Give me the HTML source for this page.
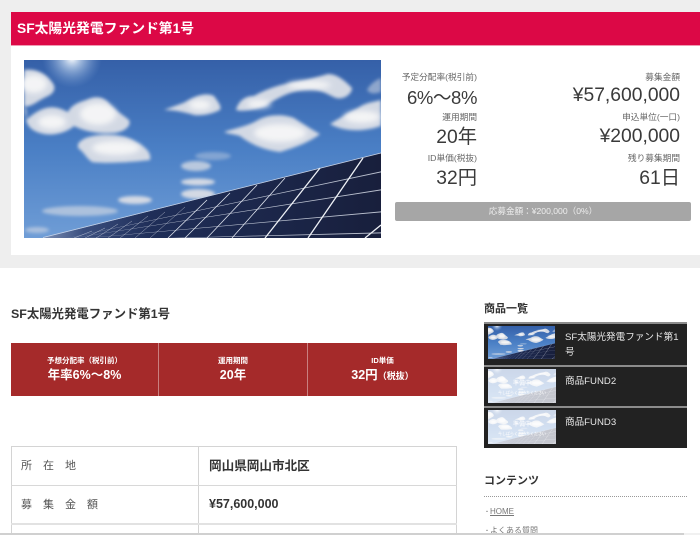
<!DOCTYPE html>
<html lang="ja"><head><meta charset="utf-8"><style>
html,body{margin:0;padding:0;width:700px;height:535px;overflow:hidden;background:#fff}
body{position:relative;font-family:"Liberation Sans","Noto Sans CJK JP",sans-serif;color:#333}
.a{position:absolute;white-space:nowrap}
.l{font-size:8.700px;color:#666;line-height:12px;text-align:right}
.v{font-size:19.300px;color:#3a3a3a;line-height:24px;text-align:right}
.r{color:#fff;text-align:center}
.th{color:#555;font-size:11px;letter-spacing:11px}
</style></head><body>
<svg width="0" height="0" style="position:absolute"><defs>
<linearGradient id="sky" x1="0" y1="0" x2="0" y2="1"><stop offset="0" stop-color="#3560a8"/><stop offset=".5" stop-color="#4a7fc5"/><stop offset="1" stop-color="#6f9dd6"/></linearGradient>
<radialGradient id="sun"><stop offset="0" stop-color="#fff"/><stop offset=".3" stop-color="#cfe0f3" stop-opacity=".7"/><stop offset="1" stop-color="#7ba0d4" stop-opacity="0"/></radialGradient>
<linearGradient id="pan" x1="0" y1="0" x2="1" y2="0"><stop offset="0" stop-color="#7b8fb5"/><stop offset=".12" stop-color="#3a4e7e"/><stop offset=".32" stop-color="#1f2e58"/><stop offset="1" stop-color="#181f3c"/></linearGradient>
<filter id="b1" x="-10%" y="-20%" width="120%" height="140%"><feGaussianBlur stdDeviation="1.500"/></filter>
<filter id="b3" x="-10%" y="-20%" width="120%" height="140%"><feGaussianBlur stdDeviation="3"/></filter>
<filter id="b2" x="-5%" y="-5%" width="110%" height="110%"><feGaussianBlur stdDeviation=".3"/></filter>
<symbol id="photo" viewBox="0 0 357 178" preserveAspectRatio="none">
<rect width="357" height="178" fill="url(#sky)"/>
<circle cx="48" cy="-2" r="30" fill="url(#sun)"/>
<g fill="#d3d9e4" filter="url(#b1)">
<path d="M0 10C12 8 22 14 28 22C33 28 30 34 22 37C12 42 6 48 0 46Z"/>
<path d="M0 46C4 50 2 56 2 60C8 55 14 50 22 48C30 46 36 48 44 52C48 44 56 42 62 40C70 36 78 36 84 42C90 50 98 54 105 60C108 66 100 72 90 73C75 74 62 72 50 66C44 72 30 76 20 74C10 72 4 68 2 60Z"/>
<path d="M54 84C58 78 66 76 76 75C90 74 104 76 112 82C120 86 128 92 126 100C110 102 80 104 68 102C62 98 60 92 54 88Z"/>
<path d="M140 50C150 46 158 44 165 40C172 36 182 32 190 36C194 42 198 46 196 50C188 54 178 56 170 55C160 52 150 50 140 50Z"/>
<path d="M212 50C214 42 220 36 230 36C240 30 256 24 272 22C284 20 296 16 304 14C314 14 322 22 328 28C328 34 320 40 312 38C302 34 296 28 280 30C262 32 252 40 240 46C230 50 220 52 212 50Z"/>
<path d="M200 72C212 68 224 66 234 60C244 54 260 54 270 58C282 66 292 72 296 74C286 82 270 88 256 92C240 90 226 84 216 76C210 74 204 74 200 72Z"/>
<path d="M306 64C316 58 326 52 334 48C342 42 350 42 357 40V66C340 72 320 72 306 64Z"/>
<path d="M343 30C346 24 352 20 357 18V32C350 34 346 34 343 30Z" opacity=".55"/>
<ellipse cx="172" cy="106" rx="15" ry="5" opacity=".8"/>
<ellipse cx="174" cy="122" rx="17" ry="3.500"/><ellipse cx="174" cy="134" rx="17" ry="5"/><ellipse cx="111" cy="140" rx="17" ry="4"/>
<ellipse cx="56" cy="151" rx="38" ry="5" opacity=".65"/><ellipse cx="13" cy="170" rx="12" ry="3" opacity=".6"/><ellipse cx="189" cy="96" rx="18" ry="4" opacity=".4"/>
</g>
<g fill="#f8f8f8" filter="url(#b3)" opacity=".9">
<ellipse cx="10" cy="24" rx="13" ry="9"/><ellipse cx="28" cy="62" rx="14" ry="7"/><ellipse cx="74" cy="54" rx="18" ry="11"/><ellipse cx="92" cy="88" rx="24" ry="7"/><ellipse cx="176" cy="45" rx="11" ry="5"/><ellipse cx="285" cy="25" rx="22" ry="4"/><ellipse cx="235" cy="44" rx="12" ry="4"/><ellipse cx="256" cy="73" rx="26" ry="9"/><ellipse cx="338" cy="57" rx="18" ry="6"/>
</g>
<polygon points="357,93 357,178 19,178" fill="url(#pan)"/>
<g filter="url(#b2)">
<g fill="#d6dce8" opacity=".85">
<polygon points="357,111.400 357,112.400 30,181"/>
<polygon points="357,129.400 357,130.400 30,181"/>
<polygon points="357,151.400 357,152.400 30,181"/>
<polygon points="357,172.400 357,173.400 30,181"/>
</g>
<path d="M19 177.500L357 93" stroke="#c8d3e6" stroke-width=".8"/>
<g stroke="#eef1f6" fill="none" stroke-width="1.300">
<path d="M339 98L284 178M296 108L241 178M357 165L341 178"/>
</g>
<g stroke="#dfe4ee" fill="none" stroke-width=".8">
<path d="M261 118L208 178M233 125L183 178M206 133L161 178M183 140L144 178"/>
</g>
<g stroke="#dfe4ee" fill="none" stroke-width=".5" opacity=".7">
<path d="M161 147L126 178M141 152L111 178M124 156L96 178M108 161L84 178M94 164L72 178M81 168L61 178M68 171L50 178"/>
</g>
</g>
</symbol>
</defs></svg>

<div class="a" style="left:0;top:0;width:700px;height:268px;background:#eee"></div>
<div class="a" style="left:11px;top:46px;width:689px;height:209px;background:#fff"></div>
<div class="a" style="left:11px;top:12px;width:689px;height:34px;background:#dc0846;border-bottom:1px solid #ef9ab2;box-sizing:border-box"></div>
<div class="a" style="left:17px;top:18px;font-size:13.800px;line-height:21px;font-weight:700;color:#fff">SF太陽光発電ファンド第1号</div>
<svg class="a" style="left:24px;top:60px" width="357" height="178"><use href="#photo" width="357" height="178"/></svg>

<div class="a l" style="left:377px;width:100px;top:71px">予定分配率(税引前)</div>
<div class="a v" style="left:377px;width:100px;top:86px;font-size:18.500px;letter-spacing:-.4px">6%～8%</div>
<div class="a l" style="left:377px;width:100px;top:111px">運用期間</div>
<div class="a v" style="left:377px;width:100px;top:126px">20年</div>
<div class="a l" style="left:377px;width:100px;top:152px">ID単価(税抜)</div>
<div class="a v" style="left:377px;width:100px;top:167px">32円</div>
<div class="a l" style="left:560px;width:120px;top:71px">募集金額</div>
<div class="a v" style="left:540px;width:140px;top:84px">¥57,600,000</div>
<div class="a l" style="left:560px;width:120px;top:111px">申込単位(一口)</div>
<div class="a v" style="left:540px;width:140px;top:125px">¥200,000</div>
<div class="a l" style="left:560px;width:120px;top:152px">残り募集期間</div>
<div class="a v" style="left:540px;width:140px;top:167px">61日</div>
<div class="a" style="left:395px;top:202px;width:296px;height:19px;background:#a6a6a6;border-radius:2px;color:#eee;font-size:8.600px;line-height:19px;text-align:center">応募金額：¥200,000（0%）</div>

<div class="a" style="left:11px;top:305px;font-size:12.400px;line-height:18px;font-weight:700;color:#333">SF太陽光発電ファンド第1号</div>

<div class="a" style="left:11px;top:343px;width:446px;height:53px;background:#a52a2a"></div>
<div class="a" style="left:158px;top:343px;width:1px;height:53px;background:#c98080"></div>
<div class="a" style="left:307px;top:343px;width:1px;height:53px;background:#c98080"></div>
<div class="a r" style="left:11px;width:147px;top:355px;font-size:7.500px;line-height:12px;font-weight:700">予想分配率（税引前）</div>
<div class="a r" style="left:11px;width:147px;top:366px;font-size:12.500px;line-height:18px;font-weight:700">年率6%～8%</div>
<div class="a r" style="left:159px;width:148px;top:355px;font-size:7.500px;line-height:12px;font-weight:700">運用期間</div>
<div class="a r" style="left:159px;width:148px;top:366px;font-size:12.500px;line-height:18px;font-weight:700">20年</div>
<div class="a r" style="left:308px;width:149px;top:355px;font-size:7.500px;line-height:12px;font-weight:700">ID単価</div>
<div class="a r" style="left:308px;width:149px;top:366px;font-size:12.500px;line-height:18px;font-weight:700">32円<span style="font-size:9px">（税抜）</span></div>

<div class="a" style="left:11px;top:446px;width:446px;height:87px;box-sizing:border-box;border:1px solid #d4d4d4;border-bottom:0"></div>
<div class="a" style="left:198px;top:446px;width:1px;height:87px;background:#d4d4d4"></div>
<div class="a" style="left:11px;top:485px;width:446px;height:1px;background:#d8d8d8"></div>
<div class="a" style="left:11px;top:523px;width:446px;height:2px;background:#e2e2e2"></div>
<div class="a th" style="left:21px;top:458px;line-height:17px">所在地</div>
<div class="a th" style="left:21px;top:497px;line-height:17px">募集金額</div>
<div class="a" style="left:209px;top:457px;font-size:12.600px;line-height:19px;font-weight:700;color:#333">岡山県岡山市北区</div>
<div class="a" style="left:209px;top:495px;font-size:12.500px;line-height:19px;font-weight:700;color:#333">¥57,600,000</div>

<div class="a" style="left:484px;top:301px;font-size:11px;line-height:17px;font-weight:700;color:#333">商品一覧</div>
<div class="a" style="left:484px;top:322px;width:203px;height:126px;background:#222"></div>
<div class="a" style="left:484px;top:322px;width:203px;height:2px;background:#8c8c8c"></div>
<div class="a" style="left:484px;top:365px;width:203px;height:2px;background:#8c8c8c"></div>
<div class="a" style="left:484px;top:406px;width:203px;height:2px;background:#8c8c8c"></div>
<svg class="a" style="left:488px;top:326px" width="67" height="33"><use href="#photo" width="67" height="33"/></svg>
<svg class="a" style="left:488px;top:369px" width="68" height="34"><use href="#photo" width="68" height="34"/><rect width="68" height="34" fill="#fff" fill-opacity=".75"/><text x="34" y="16" font-size="6" fill="#fff" text-anchor="middle" font-family="Noto Sans CJK JP">準備中</text><text x="34" y="25" font-size="4" fill="#fff" text-anchor="middle" font-family="Noto Sans CJK JP">今しばらくお待ちください</text></svg>
<svg class="a" style="left:488px;top:410px" width="68" height="34"><use href="#photo" width="68" height="34"/><rect width="68" height="34" fill="#fff" fill-opacity=".75"/><text x="34" y="16" font-size="6" fill="#fff" text-anchor="middle" font-family="Noto Sans CJK JP">準備中</text><text x="34" y="25" font-size="4" fill="#fff" text-anchor="middle" font-family="Noto Sans CJK JP">今しばらくお待ちください</text></svg>
<div class="a" style="left:565px;top:330px;font-size:9.600px;line-height:15px;color:#e6e6e6">SF太陽光発電ファンド第1<br>号</div>
<div class="a" style="left:565px;top:374px;font-size:9.600px;line-height:15px;color:#e6e6e6">商品FUND2</div>
<div class="a" style="left:565px;top:415px;font-size:9.600px;line-height:15px;color:#e6e6e6">商品FUND3</div>

<div class="a" style="left:484px;top:473px;font-size:11px;line-height:17px;font-weight:700;color:#333">コンテンツ</div>
<div class="a" style="left:484px;top:496px;width:203px;border-top:1px dotted #999"></div>
<div class="a" style="left:484px;top:505px;font-size:8px;line-height:14px;color:#777"><span style="font-size:6px">・</span><span style="text-decoration:underline">HOME</span></div>
<div class="a" style="left:484px;top:524px;font-size:8px;line-height:14px;color:#777"><span style="font-size:6px">・</span>よくある質問</div>

<div class="a" style="left:0;top:533px;width:700px;height:2px;background:#f1f1f1"></div>
<div class="a" style="left:0;top:533px;width:684px;height:2px;background:#d0d0d0"></div>
</body></html>
